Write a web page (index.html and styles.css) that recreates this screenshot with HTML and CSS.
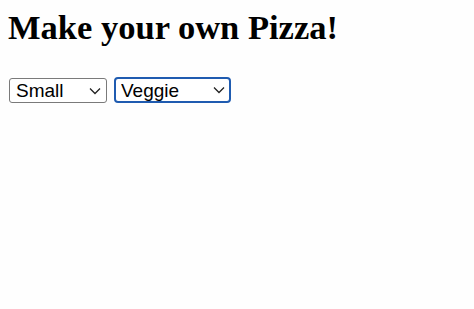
FILE: index.html
```html
<!DOCTYPE html>
<html>
<head>
    <title>Make your own Pizza!</title>
    <meta name='viewport' content='width=device-width, initial-scale=1'>
    <link rel="stylesheet" href="styles.css">
</head>
<body>
    <h1>Make your own Pizza!</h1>
    <div class="choices">
        <div class="picker size">
            <select id="size">
                <option>Small</option>
                <option>Medium</option>
                <option>Large</option>
            </select>
            <svg class="chevron" width="12" height="8" viewBox="0 0 12 8"><path d="M1 1.5 L6 6.5 L11 1.5" fill="none" stroke="#222" stroke-width="1.3"/></svg>
        </div>
        <div class="picker kind">
            <select id="kind" class="focused">
                <option>Veggie</option>
                <option>Pepperoni</option>
                <option>Margherita</option>
            </select>
            <svg class="chevron" width="12" height="8" viewBox="0 0 12 8"><path d="M1 1.5 L6 6.5 L11 1.5" fill="none" stroke="#222" stroke-width="1.3"/></svg>
        </div>
    </div>
</body>
</html>
```

FILE: styles.css
```css
body {
    margin: 0;
    padding: 8px 8px 8px;
    background-color: #fefefe;
    font-family: "Liberation Serif", serif;
}
h1 {
    font-size: 34.5px;
    font-weight: bold;
    margin: 0 0 30px;
    color: #000;
}
.choices {
    display: flex;
    gap: 7px;
    align-items: center;
}
.picker {
    position: relative;
}
.picker select {
    appearance: none;
    -webkit-appearance: none;
    font-family: "Liberation Sans", Arial, sans-serif;
    font-size: 19px;
    color: #000;
    background-color: #fff;
    border: 1px solid #7a7a7a;
    border-radius: 3px;
    height: 25px;
    padding: 0 0 0 6px;
    margin: 0 0 0 1px;
    display: block;
}
.size select {
    width: 98px;
}
.kind select {
    width: 117px;
    height: 26px;
    margin: 0;
}
.picker select.focused {
    border: 2px solid #1f5bb0;
    border-radius: 4px;
    padding-left: 5px;
}
.chevron {
    position: absolute;
    right: 6px;
    top: 9px;
    pointer-events: none;
}
```
